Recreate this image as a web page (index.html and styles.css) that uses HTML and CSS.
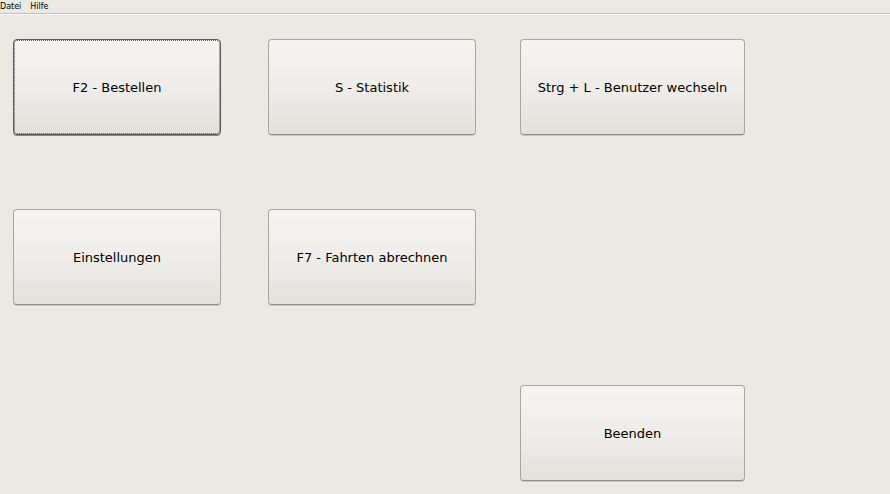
FILE: index.html
```html
<!DOCTYPE html>
<html lang="de">
<head>
  <meta charset="UTF-8">
  <title>Hauptmenü</title>
  <link rel="stylesheet" href="styles.css">
</head>
<body>
  <!-- Menüleiste -->
  <div class="menubar">
    <span class="menu-item">Datei</span>
    <span class="menu-item">Hilfe</span>
  </div>

  <div class="main">
    <button class="btn btn-default">F2 - Bestellen</button>
    <button class="btn">S - Statistik</button>
    <button class="btn btn-wide">Strg + L - Benutzer wechseln</button>

    <button class="btn">Einstellungen</button>
    <button class="btn">F7 - Fahrten abrechnen</button>
    <div></div>

    <div></div>
    <div></div>
    <button class="btn btn-wide">Beenden</button>
  </div>
</body>
</html>
```

FILE: styles.css
```css
body {
  margin: 0;
  background: #ece9e3;
  font-family: 'DejaVu Sans', Tahoma, sans-serif;
  color: #000;
  height: 100vh;
  overflow: hidden;
}

/* Menu bar */
.menubar {
  height: 13px;
  display: flex;
  align-items: center;
  gap: 9px;
  border-bottom: 1px solid #c4c1ba;
  box-shadow: 0 1px 0 #fbfaf8;
  font-size: 8px;
  line-height: 13px;
}

.main {
  display: grid;
  grid-template-columns: 255px 252px auto;
  grid-template-rows: 170px 176px 95px;
  padding: 25px 0 0 13px;
  align-items: start;
}

.btn {
  width: 208px;
  height: 96px;
  font-family: inherit;
  font-size: 13px;
  color: #000;
  background: linear-gradient(to bottom, #f5f4f2, #efedea 50%, #e4e1dc);
  border: 1px solid #aaa69f;
  border-bottom-color: #8e8a84;
  border-radius: 4px;
  box-shadow: 0 1px 0 #c9c6bf;
  padding: 0;
  cursor: pointer;
}
.btn-wide {
  width: 225px;
}
.btn:hover {
  background: linear-gradient(to bottom, #f8f7f5, #ecebe7);
}
.btn-default {
  border: 1px solid #5c5a57;
  box-shadow: 0 1px 0 #8a8782;
  outline: 1px dotted #5a5a5a;
  outline-offset: -2px;
}
```
